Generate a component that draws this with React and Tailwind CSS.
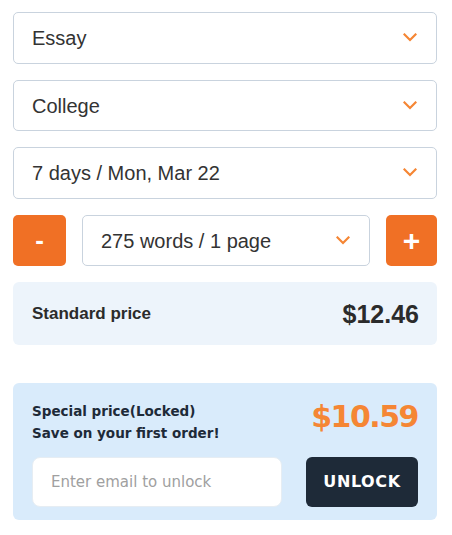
import React from 'react';

const Chevron = () => (
  <svg width="14" height="9" viewBox="0 0 14 9" fill="none" className="shrink-0">
    <path d="M1.5 1.5 L7 7 L12.5 1.5" stroke="#f58634" strokeWidth="2.2" strokeLinecap="square" />
  </svg>
);

const Select = ({ label, className = '' }) => (
  <div className={`h-[51.5px] flex items-center justify-between border border-[#c9d3de] rounded-[5px] bg-white pl-[18px] pr-[19px] ${className}`}>
    <span className="text-[20px] text-[#333333] mt-[1px]">{label}</span>
    <Chevron />
  </div>
);

const App = () => {
  const wide = { fontFamily: '"DejaVu Sans", "Open Sans", sans-serif' };
  return (
    <div className="w-[452px] h-[535px] bg-white pl-[13px] pr-[15px] pt-[12px] pb-4" style={{ fontFamily: '"Liberation Sans", Arial, sans-serif' }}>
      <div className="flex flex-col gap-[16px]">
        <Select label="Essay" />
        <Select label="College" />
        <Select label="7 days / Mon, Mar 22" />
        <div className="flex gap-[16px]">
          <button className="w-[53px] h-[51.5px] rounded-[5px] bg-[#f07025] text-white text-[26px] font-bold flex items-center justify-center">-</button>
          <Select label="275 words / 1 page" className="flex-1" />
          <button className="w-[51px] h-[51.5px] rounded-[5px] bg-[#f07025] text-white text-[30px] font-bold flex items-center justify-center">+</button>
        </div>
        <div className="h-[63px] rounded-[6px] bg-[#edf4fb] flex items-center justify-between pl-[19px] pr-[18px]">
          <span className="text-[17px] font-bold text-[#2b2b2b] mt-[1px]">Standard price</span>
          <span className="text-[25px] font-bold text-[#2b2b2b] mt-[2px]">$12.46</span>
        </div>
      </div>
      <div className="mt-[38px] rounded-[6px] bg-[#d9ebfb] px-[19px] pt-[17px] pb-[13px]" style={wide}>
        <div className="flex items-start justify-between">
          <div className="text-[13.5px] font-bold text-[#1e2a38] leading-[22px]">
            <div>Special price(Locked)</div>
            <div>Save on your first order!</div>
          </div>
          <span className="text-[30px] font-bold text-[#f58634] leading-[38px] -mt-[2px] tracking-[-1.5px]">$10.59</span>
        </div>
        <div className="flex justify-between mt-[13px]">
          <input
            placeholder="Enter email to unlock"
            className="w-[250px] h-[50px] rounded-[8px] bg-white border border-[#e6edf3] pl-[18px] text-[15px] text-[#333] placeholder:text-[#a0a0a0] outline-none"
            style={wide}
          />
          <button className="w-[112px] h-[50px] rounded-[6px] bg-[#1e2a38] text-white text-[16px] font-semibold tracking-[0.6px]" style={wide}>UNLOCK</button>
        </div>
      </div>
    </div>
  );
};

export default App;
